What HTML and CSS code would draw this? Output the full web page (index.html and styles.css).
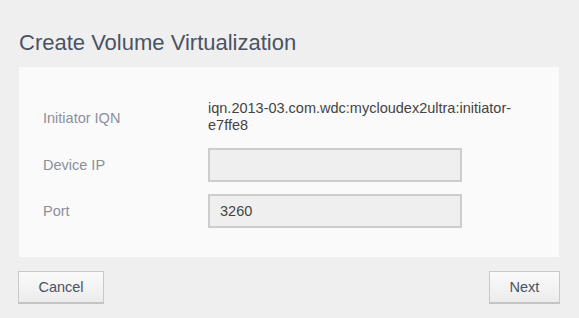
FILE: index.html
```html
<!DOCTYPE html>
<html lang="en">
<head>
    <meta charset="UTF-8">
    <title>Create Volume Virtualization</title>
    <link rel="stylesheet" href="styles.css">
</head>
<body>
    <div class="dialog">
        <h1>Create Volume Virtualization</h1>

        <div class="painel">
            <div class="linha">
                <div class="rotulo">Initiator IQN</div>
                <div class="valor">iqn.2013-03.com.wdc:mycloudex2ultra:initiator-e7ffe8</div>
            </div>
            <div class="linha">
                <div class="rotulo">Device IP</div>
                <input type="text" class="campo">
            </div>
            <div class="linha">
                <div class="rotulo">Port</div>
                <input type="text" class="campo" value="3260">
            </div>
        </div>

        <div class="botoes">
            <button>Cancel</button>
            <button>Next</button>
        </div>
    </div>
</body>
</html>
```

FILE: styles.css
```css
body {
    font-family: "Liberation Sans", Arial, sans-serif;
    background-color: #efefef;
    margin: 0;
    padding: 0;
}

.dialog {
    padding: 0 20px 0 19px;
}

h1 {
    margin: 0;
    padding-top: 30px;
    height: 37px;
    font-size: 22px;
    font-weight: normal;
    color: #4a5263;
}

.painel {
    background-color: #fafafa;
    padding: 33px 0 29px 24px;
}

.linha {
    display: flex;
    align-items: center;
    margin-bottom: 12px;
}

.linha:first-child {
    margin-bottom: 14px;
}

.linha:last-child {
    margin-bottom: 0;
}

.rotulo {
    width: 165px;
    font-size: 14.5px;
    line-height: 17px;
    color: #8a909c;
}

.linha:first-child .rotulo {
    padding-top: 2px;
}

.valor {
    width: 330px;
    font-size: 14.5px;
    line-height: 17px;
    color: #444;
    overflow-wrap: break-word;
}

.campo {
    width: 254px;
    height: 34px;
    box-sizing: border-box;
    border: 2px solid #cdcdcd;
    background-color: #efefef;
    padding: 0 10px;
    font-family: inherit;
    font-size: 14.5px;
    color: #444;
}

.botoes {
    display: flex;
    justify-content: space-between;
    margin: 14px -1px 0;
}

button {
    height: 33px;
    width: 71px;
    padding: 0;
    background: linear-gradient(#fafafa, #ececec);
    border: 1px solid #c8c8c8;
    border-bottom: 2px solid #c4c4c4;
    font-family: inherit;
    font-size: 14.5px;
    color: #4a5263;
}

button:first-child {
    width: 86px;
}
```
